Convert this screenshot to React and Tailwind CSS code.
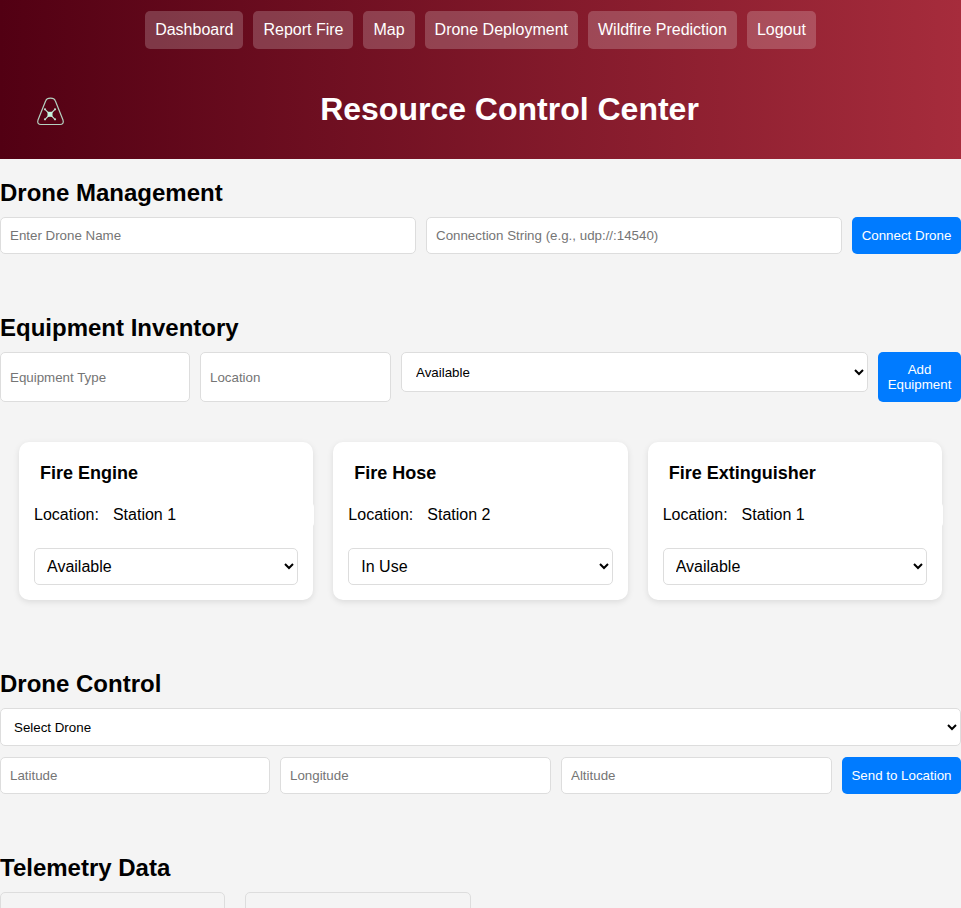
import React from 'react';

const navLinks = ['Dashboard', 'Report Fire', 'Map', 'Drone Deployment', 'Wildfire Prediction', 'Logout'];

const equipment = [
  { name: 'Fire Engine', location: 'Station 1', status: 'Available' },
  { name: 'Fire Hose', location: 'Station 2', status: 'In Use' },
  { name: 'Fire Extinguisher', location: 'Station 1', status: 'Available' },
];

const inputClass =
  'min-w-0 rounded-[5px] border border-[#dddddd] bg-white px-[9px] text-[13.33px] text-black outline-none placeholder:text-[#757575]';
const buttonClass = 'shrink-0 cursor-pointer rounded-[5px] bg-[#007bff] text-[13.33px] font-normal text-white';

const Logo = () => (
  <svg width="30" height="30" viewBox="0 0 30 30" fill="none" className="mt-[5px] shrink-0">
    <path
      d="M9.6 5 C11 1.2 18 1.2 19.4 5 L27 24 C28 27 26.5 28.5 24 28.5 L5 28.5 C2.5 28.5 1 27 2 24 Z"
      stroke="#b4d0c0"
      strokeWidth="1.2"
    />
    <path d="M9.5 13.8 L18.5 22.8 M18.5 13.8 L9.5 22.8" stroke="#c0e0d0" strokeWidth="1.2" />
    <circle cx="9" cy="13.3" r="1.1" fill="#c0e0d0" />
    <circle cx="19" cy="13.3" r="1.1" fill="#c0e0d0" />
    <circle cx="9" cy="23.3" r="1.1" fill="#c0e0d0" />
    <circle cx="19" cy="23.3" r="1.1" fill="#c0e0d0" />
    <rect x="11.5" y="15.8" width="5" height="5" fill="#c4f5de" />
  </svg>
);

const Heading = ({ children }) => <h2 className="text-2xl leading-[28px] font-bold text-black">{children}</h2>;

const EquipmentCard = ({ item }) => (
  <div className="flex-1 rounded-[10px] bg-white px-[15px] pt-[21px] pb-[15px] shadow-[0_2px_6px_rgba(0,0,0,0.1)]">
    <h3 className="pl-[6px] text-lg leading-[21px] font-bold text-black">{item.name}</h3>
    <div className="mt-[18px] -mr-[15.6px] flex h-[26px] items-center rounded-[5px] bg-white text-base text-black">
      <span>Location:</span>
      <span className="ml-[14px]">{item.location}</span>
    </div>
    <select
      defaultValue={item.status}
      className="mt-[20px] h-[37px] w-full rounded-[5px] border border-[#dddddd] bg-white pl-[8px] text-base text-black"
    >
      <option>Available</option>
      <option>In Use</option>
      <option>Maintenance</option>
    </select>
  </div>
);

export default function App() {
  return (
    <div className="h-screen overflow-hidden bg-[#f4f4f4] font-['Liberation_Sans',Arial,sans-serif]">
      <header className="h-[159px] bg-[linear-gradient(90deg,#520013,#a62c3c)] pt-[11px] text-white">
        <nav className="flex justify-center gap-[10px]">
          {navLinks.map((link) => (
            <a key={link} href="#" className="rounded-[5px] bg-white/20 px-[10px] py-[10px] text-base leading-[18px] text-white">
              {link}
            </a>
          ))}
        </nav>
        <div className="mt-[42px] flex items-start pl-[36px]">
          <Logo />
          <h1 className="flex-1 pr-[8px] text-center text-[32px] leading-[36px] font-bold">Resource Control Center</h1>
        </div>
      </header>

      <section className="pt-[20px]">
        <Heading>Drone Management</Heading>
        <div className="mt-[10px] flex gap-[10px]">
          <input className={`${inputClass} h-[37px] flex-1`} placeholder="Enter Drone Name" />
          <input className={`${inputClass} h-[37px] flex-1`} placeholder="Connection String (e.g., udp://:14540)" />
          <button className={`${buttonClass} h-[37px] w-[109px]`}>Connect Drone</button>
        </div>
      </section>

      <section className="pt-[60px]">
        <Heading>Equipment Inventory</Heading>
        <div className="mt-[10px] flex items-start gap-[10px]">
          <input className={`${inputClass} h-[50px] w-[190px] flex-none`} placeholder="Equipment Type" />
          <input className={`${inputClass} h-[50px] w-[191px] flex-none`} placeholder="Location" />
          <select
            defaultValue="Available"
            className="h-[40px] min-w-0 flex-1 rounded-[5px] border border-[#dddddd] bg-white pl-[10px] text-[13.33px] text-black"
          >
            <option>Available</option>
            <option>In Use</option>
            <option>Maintenance</option>
          </select>
          <button className={`${buttonClass} h-[50px] w-[83px] leading-[15px]`}>Add Equipment</button>
        </div>
        <div className="mt-[40px] flex gap-[20px] px-[19px]">
          {equipment.map((item) => (
            <EquipmentCard key={item.name} item={item} />
          ))}
        </div>
      </section>

      <section className="pt-[70px]">
        <Heading>Drone Control</Heading>
        <select
          defaultValue="Select Drone"
          className="mt-[10px] block h-[38px] w-full rounded-[5px] border border-[#dddddd] bg-white pl-[9px] text-[13.33px] text-black"
        >
          <option>Select Drone</option>
        </select>
        <div className="mt-[11px] flex gap-[10px]">
          <input className={`${inputClass} h-[37px] w-[270px] flex-none`} placeholder="Latitude" />
          <input className={`${inputClass} h-[37px] flex-1`} placeholder="Longitude" />
          <input className={`${inputClass} h-[37px] flex-1`} placeholder="Altitude" />
          <button className={`${buttonClass} h-[37px] w-[119px]`}>Send to Location</button>
        </div>
      </section>

      <section className="pt-[60px]">
        <Heading>Telemetry Data</Heading>
        <div className="mt-[10px] flex gap-[20px]">
          <div className="h-[100px] w-[225px] rounded-[5px] border border-[#dddddd]" />
          <div className="h-[100px] w-[226px] rounded-[5px] border border-[#dddddd]" />
        </div>
      </section>
    </div>
  );
}
